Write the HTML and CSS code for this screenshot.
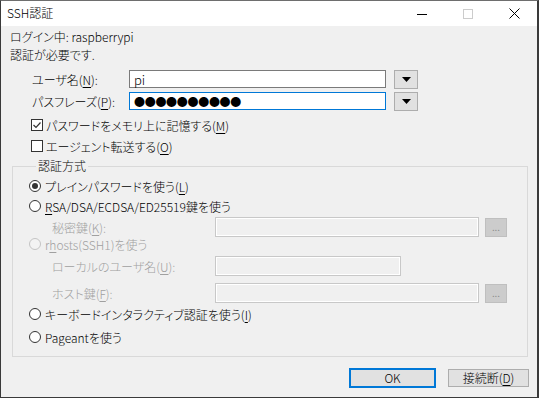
FILE: index.html
```html
<!DOCTYPE html>
<html lang="ja">
  <head>
    <meta charset="UTF-8" />
    <title>SSH認証</title>
    <link rel="stylesheet" href="styles.css">
  </head>
  <body>
    <div class="window">
      <div class="titlebar">
        <span class="title">SSH認証</span>
        <div class="controls">
          <span class="ctl">
            <svg width="10" height="10" viewBox="0 0 10 10"><path d="M0 5.5h10" stroke="#000" stroke-width="1"/></svg>
          </span>
          <span class="ctl">
            <svg width="10" height="10" viewBox="0 0 10 10"><rect x="0.5" y="0.5" width="9" height="9" fill="none" stroke="#cccccc"/></svg>
          </span>
          <span class="ctl">
            <svg width="11" height="11" viewBox="0 0 11 11"><path d="M0.5 0.5l10 10M10.5 0.5l-10 10" stroke="#000" stroke-width="1"/></svg>
          </span>
        </div>
      </div>

      <div class="content">
        <div class="line first">ログイン中: raspberrypi</div>
        <div class="line">認証が必要です.</div>

        <div class="field-row user">
          <span class="field-label">ユーザ名(<u>N</u>):</span>
          <div class="input">pi</div>
          <span class="drop"><svg width="9" height="5" viewBox="0 0 9 5"><path d="M0 0h9l-4.5 5z" fill="#000"/></svg></span>
        </div>
        <div class="field-row pass">
          <span class="field-label">パスフレーズ(<u>P</u>):</span>
          <div class="input focused"><span class="dots">●●●●●●●●●●</span></div>
          <span class="drop"><svg width="9" height="5" viewBox="0 0 9 5"><path d="M0 0h9l-4.5 5z" fill="#000"/></svg></span>
        </div>

        <div class="check-row first-check">
          <span class="box">
            <svg width="12" height="12" viewBox="0 0 12 12"><rect x="0.5" y="0.5" width="11" height="11" fill="#fff" stroke="#333"/><path d="M2.5 6l2.5 2.5 4.5-5" fill="none" stroke="#333" stroke-width="1.2"/></svg>
          </span>
          <span>パスワードをメモリ上に記憶する(<u>M</u>)</span>
        </div>
        <div class="check-row second-check">
          <span class="box">
            <svg width="12" height="12" viewBox="0 0 12 12"><rect x="0.5" y="0.5" width="11" height="11" fill="#fff" stroke="#333"/></svg>
          </span>
          <span>エージェント転送する(<u>O</u>)</span>
        </div>

        <fieldset class="group">
          <legend>認証方式</legend>

          <div class="radio-row r-plain">
            <span class="radio checked"></span>
            <span>プレインパスワードを使う(<u>L</u>)</span>
          </div>
          <div class="radio-row r-rsa">
            <span class="radio"></span>
            <span><u>R</u>SA/DSA/ECDSA/ED25519鍵を使う</span>
          </div>
          <div class="sub-row r-key">
            <span class="sub-label">秘密鍵(<u>K</u>):</span>
            <div class="input disabled wide"></div>
            <span class="more">...</span>
          </div>
          <div class="radio-row r-rhosts disabled-text">
            <span class="radio off"></span>
            <span>r<u>h</u>osts(SSH1)を使う</span>
          </div>
          <div class="sub-row r-local">
            <span class="sub-label">ローカルのユーザ名(<u>U</u>):</span>
            <div class="input disabled narrow"></div>
          </div>
          <div class="sub-row r-host">
            <span class="sub-label">ホスト鍵(<u>F</u>):</span>
            <div class="input disabled wide"></div>
            <span class="more">...</span>
          </div>
          <div class="radio-row r-kbd">
            <span class="radio"></span>
            <span>キーボードインタラクティブ認証を使う(<u>I</u>)</span>
          </div>
          <div class="radio-row r-pageant">
            <span class="radio"></span>
            <span>Pageantを使う</span>
          </div>
        </fieldset>

        <div class="buttons">
          <span class="btn default">OK</span>
          <span class="btn">接続断(<u>D</u>)</span>
        </div>
      </div>
    </div>
  </body>
</html>
```

FILE: styles.css
```css
html,
body {
  margin: 0;
  padding: 0;
}

body {
  font-family: "Noto Sans CJK JP", "Noto Sans", sans-serif;
  font-size: 12px;
  font-weight: 300;
  font-feature-settings: "palt";
  color: #000;
  background-color: #3a3a3a;
}

u {
  text-decoration-thickness: 1px;
  text-underline-offset: 2px;
}

.window {
  width: 539px;
  height: 398px;
  box-sizing: border-box;
  border: 1px solid #3a3a3a;
  border-top-color: #6e6e6e;
  border-right-width: 2px;
  background-color: #f0f0f0;
  display: flex;
  flex-direction: column;
}

/* Title bar */
.titlebar {
  height: 25px;
  flex: none;
  background-color: #fff;
  display: flex;
  align-items: center;
  justify-content: space-between;
}

.title {
  padding-left: 6px;
  line-height: 16px;
  margin-top: -1px;
}

.controls {
  display: flex;
  height: 100%;
}

.ctl {
  width: 46px;
  display: flex;
  align-items: center;
  justify-content: center;
}

.ctl svg {
  display: block;
}

/* Content */
.content {
  padding: 0 8px 0 9px;
  display: flex;
  flex-direction: column;
}

.line {
  height: 18px;
  line-height: 18px;
}

.line.first {
  margin-top: 2px;
}

.field-row {
  display: flex;
  align-items: center;
  height: 18px;
  margin-left: 22px;
}

.field-row.user {
  margin-top: 6px;
}

.field-row.pass {
  margin-top: 4px;
}

.field-label {
  width: 97px;
  flex: none;
}

.input {
  box-sizing: border-box;
  width: 257px;
  height: 18px;
  background-color: #fff;
  border: 1px solid #7a7a7a;
  padding-left: 4px;
  font-size: 13px;
  line-height: 15px;
  display: flex;
  align-items: center;
}

.input.focused {
  border-color: #0078d7;
}

.dots {
  font-size: 11px;
  font-weight: 400;
  letter-spacing: -0.3px;
  line-height: 14px;
}

.drop {
  box-sizing: border-box;
  width: 24px;
  height: 19px;
  margin-left: 8px;
  background-color: #e1e1e1;
  border: 1px solid #adadad;
  display: flex;
  align-items: center;
  justify-content: center;
}

.drop svg {
  display: block;
}

.check-row {
  display: flex;
  align-items: center;
  height: 18px;
  margin-left: 21px;
}

.check-row.first-check {
  margin-top: 6px;
}

.check-row.second-check {
  margin-top: 3px;
}

.box {
  width: 12px;
  height: 12px;
  margin-right: 3px;
}

.box svg {
  display: block;
}

/* Group box */
.group {
  margin: 3px 0 0 2px;
  padding: 5px 0 12px 16px;
  width: 516px;
  box-sizing: border-box;
  border: 1px solid #d9d9d9;
  min-width: 0;
}

.group legend {
  margin-left: 7px;
  padding: 0 2px;
  line-height: 16px;
}

.radio-row {
  display: flex;
  align-items: center;
  height: 14px;
}

.radio {
  box-sizing: border-box;
  width: 12px;
  height: 12px;
  border: 1px solid #333;
  border-radius: 50%;
  background-color: #fff;
  margin-right: 4px;
  display: flex;
  align-items: center;
  justify-content: center;
}

.radio.checked::after {
  content: "";
  width: 6px;
  height: 6px;
  border-radius: 50%;
  background-color: #333;
}

.radio.off {
  border-color: #c4c4c4;
  background-color: #f3f3f3;
}

.disabled-text,
.sub-label {
  color: #a0a0a0;
}

.r-rsa {
  margin-top: 6px;
}

.r-kbd {
  margin-top: 4px;
}

.r-pageant {
  margin-top: 9px;
}

.sub-row {
  display: flex;
  align-items: center;
  height: 20px;
  padding-left: 23px;
}

.r-key {
  margin-top: 4px;
}

.r-local {
  margin-top: 5px;
}

.r-host {
  margin-top: 7px;
}

.sub-label {
  width: 163px;
  flex: none;
}

.input.disabled {
  height: 20px;
  background-color: #f0f0f0;
  border-color: #c8c8c8;
  box-shadow: inset 0 0 0 1px #fff;
}

.input.wide {
  width: 264px;
}

.input.narrow {
  width: 186px;
}

.more {
  box-sizing: border-box;
  width: 22px;
  height: 19px;
  margin-left: 6px;
  background-color: #cccccc;
  border: 1px solid #bfbfbf;
  color: #8a8a8a;
  font-size: 11px;
  line-height: 14px;
  text-align: center;
}

/* Buttons */
.buttons {
  display: flex;
  align-items: center;
  justify-content: flex-end;
  gap: 12px;
  margin-top: 11px;
  margin-right: 0;
}

.btn {
  box-sizing: border-box;
  width: 81px;
  height: 18px;
  background-color: #e1e1e1;
  border: 1px solid #adadad;
  display: flex;
  align-items: center;
  justify-content: center;
  line-height: 14px;
}

.btn.default {
  width: 87px;
  height: 20px;
  border: 2px solid #0078d7;
}
```
